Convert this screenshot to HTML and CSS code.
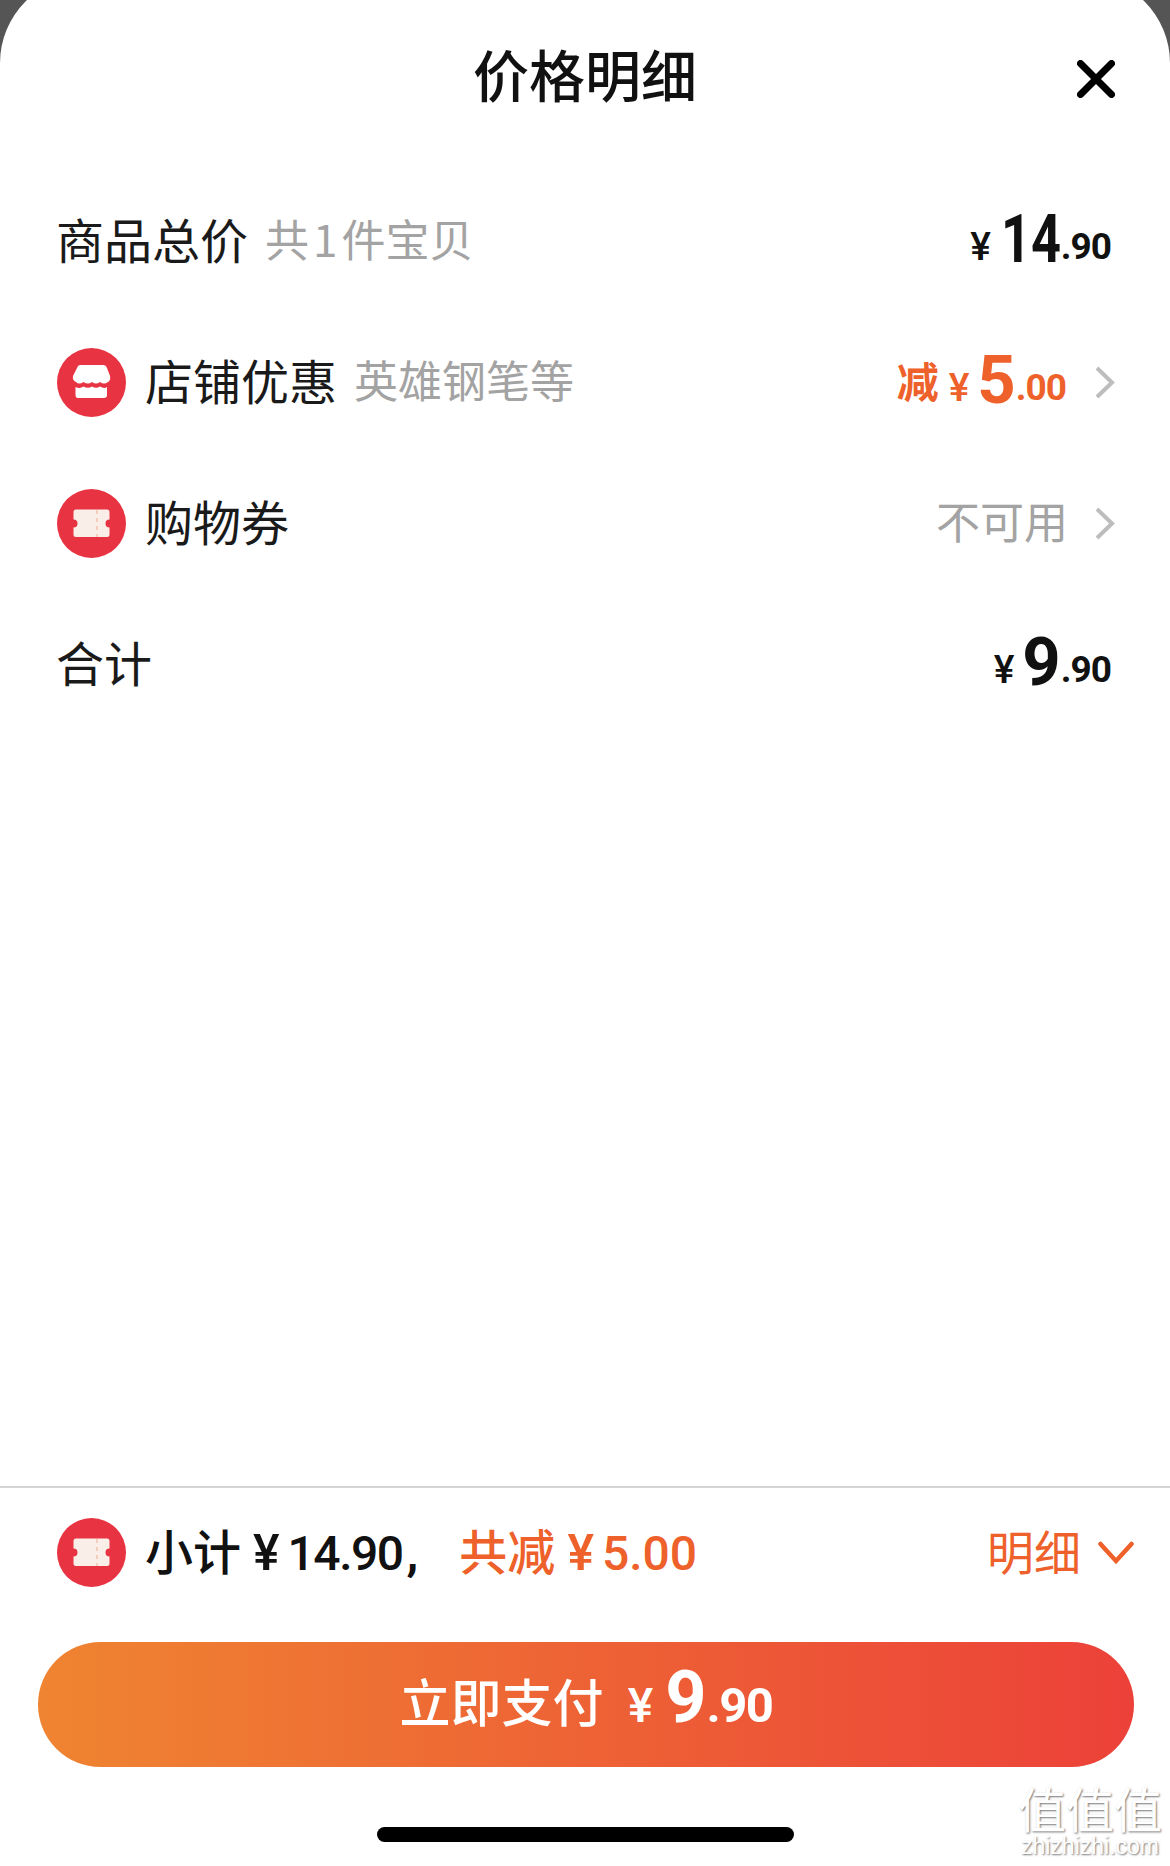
FILE: index.html
```html
<!DOCTYPE html>
<html lang="zh-CN">
<head>
    <meta charset="UTF-8">
    <meta name="viewport" content="width=device-width, initial-scale=1.0">
    <title>价格明细</title>
    <link rel="stylesheet" href="styles.css">
</head>
<body>
    <svg class="defs" width="0" height="0">
        <symbol id="icon-shop" viewBox="0 0 69 69">
            <circle cx="34.5" cy="34.5" r="34.5" fill="#e83342"/>
            <path fill="#fff" d="M23 17H46Q49 17 50 20L53 28Q54 32 51 34Q47 37 43 34Q39 37 35 34Q31 37 26.500 34Q22 37 19 34Q15 32 16 28L20 20Q21 17 23 17Z"/>
            <path fill="#fff" d="M18.500 39Q23 41 26.500 38.500Q31 41 35 38.500Q39 41 43 38.500Q47 41 50 39V47Q50 50 47 50H21Q18.500 50 18.500 47Z"/>
        </symbol>
        <symbol id="icon-ticket" viewBox="0 0 69 69">
            <circle cx="34.5" cy="34.5" r="34.5" fill="#e83342"/>
            <path fill="#faeee8" d="M19 20.500H50Q52.500 20.500 52.500 23V30.500A4 4 0 0 0 52.500 38.500V45.500Q52.500 48 50 48H19Q16.500 48 16.500 45.500V38.500A4 4 0 0 0 16.500 30.500V23Q16.500 20.500 19 20.500Z"/>
            <path stroke="#f3cdbd" stroke-width="2" stroke-dasharray="4 4" d="M40 21V48"/>
        </symbol>
    </svg>

    <div class="sheet">
        <header class="head">
            <h1>价格明细</h1>
            <svg class="close" viewBox="0 0 38 38">
                <path d="M3.500 3.500L34.500 34.500M34.500 3.500L3.500 34.500" stroke="#000" stroke-width="7" stroke-linecap="round"/>
            </svg>
        </header>

        <div class="rows">
            <div class="row">
                <span class="label">商品总价</span>
                <span class="hint">共<i class="hint-num">1</i>件宝贝</span>
                <span class="price"><i class="yen">¥</i><b class="big tight">14</b><i class="cents">.90</i></span>
            </div>
            <div class="row">
                <svg class="badge"><use href="#icon-shop"/></svg>
                <span class="label">店铺优惠</span>
                <span class="hint">英雄钢笔等</span>
                <span class="price orange"><em class="cut">减</em><i class="yen">¥</i><b class="big">5</b><i class="cents">.00</i></span>
                <svg class="chev" viewBox="0 0 20 33"><path d="M2 2L17 16.500L2 31" fill="none" stroke="#bdbdbd" stroke-width="4"/></svg>
            </div>
            <div class="row">
                <svg class="badge"><use href="#icon-ticket"/></svg>
                <span class="label">购物券</span>
                <span class="off">不可用</span>
                <svg class="chev" viewBox="0 0 20 33"><path d="M2 2L17 16.500L2 31" fill="none" stroke="#bdbdbd" stroke-width="4"/></svg>
            </div>
            <div class="row">
                <span class="label">合计</span>
                <span class="price"><i class="yen">¥</i><b class="big">9</b><i class="cents">.90</i></span>
            </div>
        </div>

        <footer class="foot">
            <div class="summary">
                <svg class="badge"><use href="#icon-ticket"/></svg>
                <span class="sum">小计<i class="sum-yen">¥</i><i class="sum-num">14.90</i><i class="comma">,</i></span>
                <span class="sum orange">共减<i class="sum-yen">¥</i><i class="sum-num">5.00</i></span>
                <span class="more">明细</span>
                <svg class="down" viewBox="0 0 36 24"><path d="M2.500 3L18 20L33.500 3" fill="none" stroke="#ee612b" stroke-width="4.500" stroke-linecap="round"/></svg>
            </div>
            <button class="pay">
                <span class="pay-text">立即支付</span>
                <i class="yen">¥</i><b class="big">9</b><i class="cents">.90</i>
            </button>
            <div class="home-bar"></div>
        </footer>

        <div class="mark">
            <div class="mark-logo">值值值</div>
            <div class="mark-url">zhizhizhi.com</div>
        </div>
    </div>
</body>
</html>
```

FILE: styles.css
```css
* {
    box-sizing: border-box;
}
body {
    margin: 0;
    width: 1170px;
    height: 1866px;
    background: #555;
    font-family: "Noto Sans CJK SC", "Noto Sans", sans-serif;
    color: #111;
    overflow: hidden;
}
.defs {
    position: absolute;
}
.sheet {
    position: relative;
    display: flex;
    flex-direction: column;
    height: 1890px;
    margin-top: -24px;
    background: #fff;
    border-radius: 87px 87px 0 0;
}
.head {
    position: relative;
    display: flex;
    align-items: center;
    justify-content: center;
    height: 178px;
    padding: 16px 0 0;
}
.head h1 {
    margin: 0;
    font-size: 56px;
    font-weight: 500;
    line-height: 1;
}
.close {
    position: absolute;
    left: 1077px;
    top: 84px;
    width: 38px;
    height: 38px;
}
.rows {
    flex: 1;
    margin-top: 17px;
    padding: 0 59px 0 57px;
}
.row {
    display: flex;
    align-items: center;
    height: 141px;
    font-size: 48px;
}
.badge {
    flex: none;
    width: 69px;
    height: 69px;
    margin-right: 19px;
}
.label {
    padding-bottom: 8px;
    color: #1a1a1a;
}
.row .label:first-child {
    margin-left: -1px;
}
.hint {
    margin-left: 17px;
    padding-bottom: 8px;
    color: #a3a3a3;
    font-size: 44px;
}
.hint-num {
    margin: 0 4px;
    font-style: normal;
}
.off {
    margin: 0 -2px 0 auto;
    padding-bottom: 8px;
    color: #a3a3a3;
    font-size: 44px;
}
.price {
    margin-left: auto;
    padding-bottom: 4px;
    font-family: "Roboto", sans-serif;
    white-space: nowrap;
}
.yen {
    font-style: normal;
    font-weight: 500;
    font-size: 39px;
    margin-right: 8px;
    vertical-align: 2px;
}
.big {
    display: inline-block;
    font-size: 67px;
    line-height: 1;
}
.tight {
    margin-left: -15px;
    transform: scaleX(.78);
    transform-origin: right;
}
.cents {
    font-style: normal;
    font-weight: 700;
    font-size: 37px;
    letter-spacing: -1px;
    vertical-align: 3px;
}
.cut {
    font-family: "Noto Sans CJK SC", sans-serif;
    font-style: normal;
    font-weight: 700;
    font-size: 42px;
    margin-right: 10px;
    vertical-align: 5px;
}
.orange {
    color: #ee612b;
}
.chev {
    flex: none;
    width: 20px;
    height: 33px;
    margin: 0 -4px 0 29px;
}
.foot {
    padding-bottom: 24px;
    border-top: 2px solid #d4d4d4;
}
.summary {
    display: flex;
    align-items: center;
    height: 129px;
    padding: 0 36px 0 57px;
}
.sum {
    padding-bottom: 8px;
    font-size: 48px;
    font-weight: 500;
    margin-right: 41px;
    white-space: nowrap;
}
.sum-yen,
.sum-num,
.comma {
    font-family: "Roboto", sans-serif;
    font-style: normal;
    font-weight: 500;
}
.sum-yen {
    margin: 0 8px 0 12px;
    font-size: 50px;
}
.sum-num {
    font-size: 48px;
    letter-spacing: -1.500px;
}
.orange .sum-num {
    letter-spacing: 0;
}
.comma {
    margin-left: 4px;
    font-weight: 700;
}
.more {
    margin-left: auto;
    padding-bottom: 6px;
    font-size: 47px;
    color: #ee612b;
}
.down {
    width: 36px;
    height: 24px;
    margin-left: 17px;
}
.pay {
    display: flex;
    align-items: baseline;
    justify-content: center;
    width: 1096px;
    height: 125px;
    margin: 25px 0 0 38px;
    padding: 20px 0 0;
    border: 0;
    border-radius: 63px;
    background: linear-gradient(90deg, #ef8431, #ec4139);
    color: #fff;
    font-family: "Roboto", sans-serif;
}
.pay-text {
    font-family: "Noto Sans CJK SC", sans-serif;
    font-size: 51px;
    font-weight: 500;
    margin-right: 24px;
}
.pay .yen {
    font-size: 48px;
    margin-right: 12px;
}
.pay .big {
    font-size: 72px;
}
.pay .cents {
    font-size: 49px;
    letter-spacing: -1.500px;
}
.home-bar {
    width: 417px;
    height: 15px;
    margin: 60px 0 0 377px;
    background: #000;
    border-radius: 8px;
}
.mark {
    position: absolute;
    left: 1018px;
    top: 1804px;
    width: 144px;
    text-align: center;
    color: #fff;
    text-shadow: 1px 1px 2px #777;
}
.mark-logo {
    font-size: 48px;
    line-height: 54px;
    white-space: nowrap;
}
.mark-url {
    font-family: "Liberation Sans", sans-serif;
    font-size: 23px;
    line-height: 24px;
    white-space: nowrap;
}
```
